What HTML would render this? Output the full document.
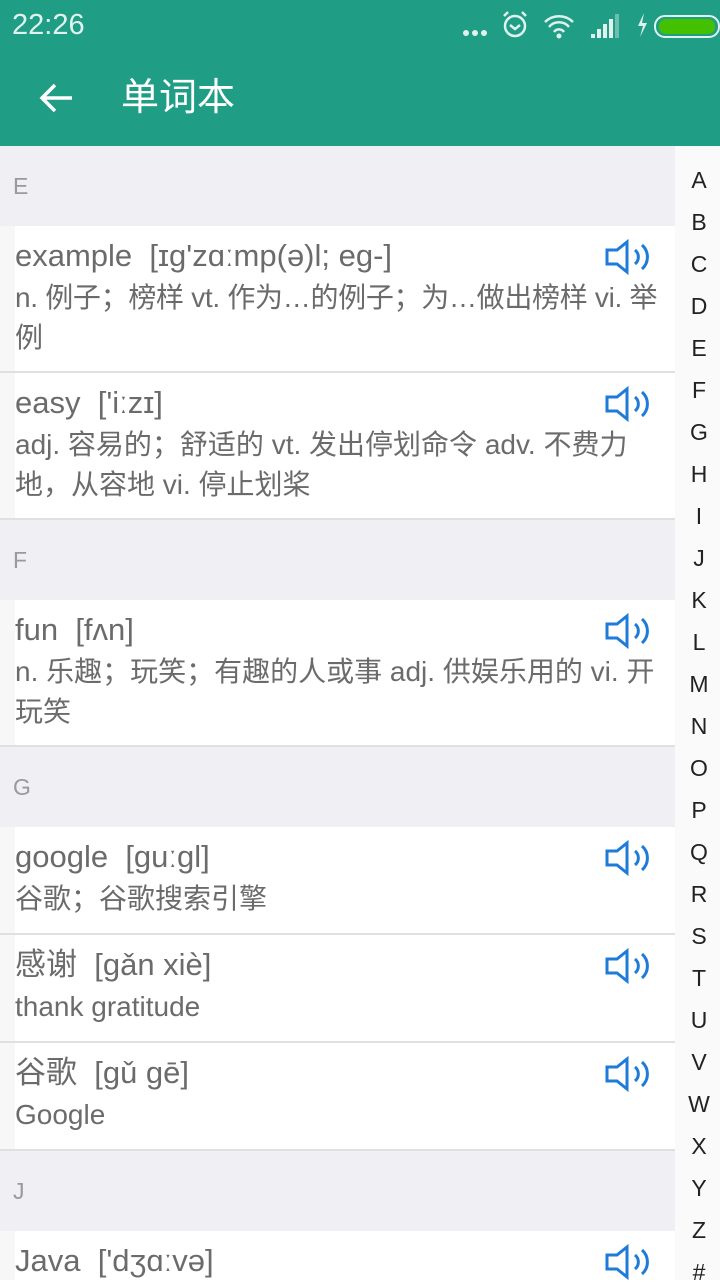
<!DOCTYPE html>
<html><head><meta charset="utf-8"><style>
*{margin:0;padding:0;box-sizing:border-box}
body{width:720px;height:1280px;overflow:hidden;background:#fff;font-family:"Liberation Sans","Noto Sans CJK SC",sans-serif;position:relative}
.bar{position:absolute;left:0;top:0;width:720px;height:146px;background:#209d85}
.time{position:absolute;left:12px;top:9px;color:#e0f2ee;font-size:29px}
.title{position:absolute;left:121px;top:74px;color:#fff;font-size:38px;line-height:48px}
.sec{position:absolute;left:0;width:675px;height:81px;background:#efeff4}
.sec span{position:absolute;left:13px;top:25px;font-size:23px;line-height:30px;color:#9a9a9a}
.row{position:absolute;left:0;width:675px;background:#fff;border-bottom:2px solid #e0e0e0}
.row:before{content:"";position:absolute;left:0;top:0;bottom:0;width:15px;background:#f7f7f7}
.w{position:absolute;left:15px;top:10px;font-size:31px;line-height:40px;color:#6b6b6b;white-space:nowrap}
.d{position:absolute;left:15px;top:52px;width:651px;font-size:28px;line-height:40px;color:#6b6b6b}
.sp{position:absolute;left:604px;top:13px}
.side{position:absolute;left:675px;top:146px;width:45px;height:1134px;background:#fafafa}
.side div{position:absolute;left:0;width:48px;text-align:center;font-size:23px;line-height:24px;color:#222}
</style></head><body>
<div class="bar">
<div class="time">22:26</div>
<svg style="position:absolute;left:460px;top:10px" width="260" height="32" viewBox="0 0 260 32">
<g fill="#e0f2ee"><circle cx="6" cy="23" r="3"/><circle cx="15" cy="23" r="3"/><circle cx="24" cy="23" r="3"/></g>
<g fill="none" stroke="#e0f2ee" stroke-width="2.5"><circle cx="55" cy="16" r="10"/><path d="M50 15l5 4 5-4M44 6l4-4M66 6l-4-4"/>
<path d="M85 12a20 20 0 0 1 28 0M89 17a13 13 0 0 1 20 0M94 22a6 6 0 0 1 10 0"/></g>
<circle cx="99" cy="26" r="2.5" fill="#e0f2ee"/>
<g fill="#e0f2ee"><rect x="131" y="24" width="4" height="4"/><rect x="137" y="19" width="4" height="9"/><rect x="143" y="14" width="4" height="14"/><rect x="149" y="9" width="4" height="19"/><rect x="155" y="4" width="4" height="24" opacity=".4"/>
<path d="M184 3l-6 13h5l-3 11 7-14h-5z"/></g>
<rect x="195" y="6" width="64" height="21" rx="10" fill="none" stroke="#e0f2ee" stroke-width="2"/>
<rect x="199" y="9" width="56" height="15" rx="7" fill="#43c000"/>
</svg>
<svg style="position:absolute;left:38px;top:82px" width="36" height="32" viewBox="0 0 36 32"><path d="M34 16H5M17 3L4 16l13 13" fill="none" stroke="#fff" stroke-width="3.5"/></svg>
<div class="title">单词本</div>
</div>

<div class="sec" style="top:146px"><span>E</span></div>
<div class="row" style="top:226px;height:147px"><div class="w">example&nbsp; [ɪɡ'zɑːmp(ə)l; eɡ-]</div><div class="d" style="width:662px;letter-spacing:-0.3px">n. 例子；榜样 vt. 作为…的例子；为…做出榜样 vi. 举例</div><svg class="sp" width="46" height="36" viewBox="0 0 46 36"><g fill="none" stroke="#1e7bd8" stroke-width="3"><path d="M3 11h10l10-8v30l-10-8H3z"/><path d="M31 11a9 9 0 0 1 0 14M38 6a16 16 0 0 1 0 24"/></g></svg></div>
<div class="row" style="top:373px;height:147px"><div class="w">easy&nbsp; ['iːzɪ]</div><div class="d">adj. 容易的；舒适的 vt. 发出停划命令 adv. 不费力地，从容地 vi. 停止划桨</div><svg class="sp" width="46" height="36" viewBox="0 0 46 36"><g fill="none" stroke="#1e7bd8" stroke-width="3"><path d="M3 11h10l10-8v30l-10-8H3z"/><path d="M31 11a9 9 0 0 1 0 14M38 6a16 16 0 0 1 0 24"/></g></svg></div>
<div class="sec" style="top:520px;height:80px"><span>F</span></div>
<div class="row" style="top:600px;height:147px"><div class="w">fun&nbsp; [fʌn]</div><div class="d">n. 乐趣；玩笑；有趣的人或事 adj. 供娱乐用的 vi. 开玩笑</div><svg class="sp" width="46" height="36" viewBox="0 0 46 36"><g fill="none" stroke="#1e7bd8" stroke-width="3"><path d="M3 11h10l10-8v30l-10-8H3z"/><path d="M31 11a9 9 0 0 1 0 14M38 6a16 16 0 0 1 0 24"/></g></svg></div>
<div class="sec" style="top:747px;height:80px"><span>G</span></div>
<div class="row" style="top:827px;height:108px"><div class="w">google&nbsp; [guːgl]</div><div class="d">谷歌；谷歌搜索引擎</div><svg class="sp" width="46" height="36" viewBox="0 0 46 36"><g fill="none" stroke="#1e7bd8" stroke-width="3"><path d="M3 11h10l10-8v30l-10-8H3z"/><path d="M31 11a9 9 0 0 1 0 14M38 6a16 16 0 0 1 0 24"/></g></svg></div>
<div class="row" style="top:935px;height:108px"><div class="w">感谢&nbsp; [gǎn xiè]</div><div class="d">thank gratitude</div><svg class="sp" width="46" height="36" viewBox="0 0 46 36"><g fill="none" stroke="#1e7bd8" stroke-width="3"><path d="M3 11h10l10-8v30l-10-8H3z"/><path d="M31 11a9 9 0 0 1 0 14M38 6a16 16 0 0 1 0 24"/></g></svg></div>
<div class="row" style="top:1043px;height:108px"><div class="w">谷歌&nbsp; [gǔ gē]</div><div class="d">Google</div><svg class="sp" width="46" height="36" viewBox="0 0 46 36"><g fill="none" stroke="#1e7bd8" stroke-width="3"><path d="M3 11h10l10-8v30l-10-8H3z"/><path d="M31 11a9 9 0 0 1 0 14M38 6a16 16 0 0 1 0 24"/></g></svg></div>
<div class="sec" style="top:1151px;height:80px"><span>J</span></div>
<div class="row" style="top:1231px;height:49px;border:0"><div class="w">Java&nbsp; ['dʒɑːvə]</div><svg class="sp" width="46" height="36" viewBox="0 0 46 36"><g fill="none" stroke="#1e7bd8" stroke-width="3"><path d="M3 11h10l10-8v30l-10-8H3z"/><path d="M31 11a9 9 0 0 1 0 14M38 6a16 16 0 0 1 0 24"/></g></svg></div>

<div class="side">
<div style="top:22px">A</div><div style="top:64px">B</div><div style="top:106px">C</div><div style="top:148px">D</div><div style="top:190px">E</div><div style="top:232px">F</div><div style="top:274px">G</div><div style="top:316px">H</div><div style="top:358px">I</div><div style="top:400px">J</div><div style="top:442px">K</div><div style="top:484px">L</div><div style="top:526px">M</div><div style="top:568px">N</div><div style="top:610px">O</div><div style="top:652px">P</div><div style="top:694px">Q</div><div style="top:736px">R</div><div style="top:778px">S</div><div style="top:820px">T</div><div style="top:862px">U</div><div style="top:904px">V</div><div style="top:946px">W</div><div style="top:988px">X</div><div style="top:1030px">Y</div><div style="top:1072px">Z</div><div style="top:1114px">#</div>
</div>
</body></html>
